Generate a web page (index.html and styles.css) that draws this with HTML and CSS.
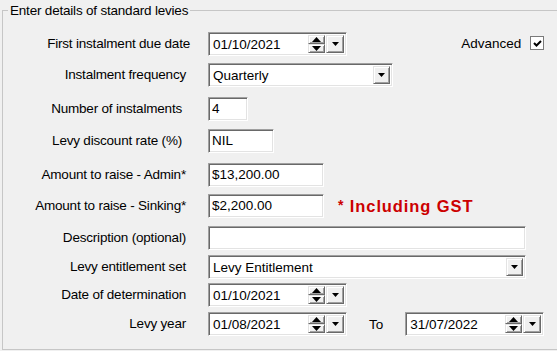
FILE: index.html
```html
<!DOCTYPE html>
<html lang="en">
<head>
    <meta charset="UTF-8">
    <meta name="viewport" content="width=device-width, initial-scale=1.0">
    <title>Standard Levies</title>
    <link rel="stylesheet" href="styles.css">
</head>
<body>

    <fieldset class="levy-group">
        <legend>Enter details of standard levies</legend>

        <div class="form-grid">
            <!-- First instalment -->
            <label class="field-label label-wide">First instalment due date</label>
            <div class="field">
                <div class="date-picker">
                    <span class="date-text">01/10/2021</span>
                    <span class="spin">
                        <span class="btn"><svg width="9" height="5"><path d="M4.5 0L9 5H0z"/></svg></span>
                        <span class="btn"><svg width="9" height="5"><path d="M0 0h9L4.5 5z"/></svg></span>
                    </span>
                    <span class="btn drop-btn"><svg width="7" height="4"><path d="M0 0h7L3.5 4z"/></svg></span>
                </div>
                <label class="advanced">
                    Advanced
                    <span class="check-box"><svg width="11" height="11"><path d="M2 5l2.5 2.5L9 3" fill="none" stroke="#000" stroke-width="2"/></svg></span>
                </label>
            </div>

            <label class="field-label">Instalment frequency</label>
            <div class="field">
                <div class="combo combo-freq">
                    <span class="combo-text">Quarterly</span>
                    <span class="btn drop-btn"><svg width="7" height="4"><path d="M0 0h7L3.5 4z"/></svg></span>
                </div>
            </div>

            <label class="field-label label-short">Number of instalments</label>
            <div class="field">
                <div class="text-box box-count">4</div>
            </div>

            <label class="field-label label-short">Levy discount rate (%)</label>
            <div class="field">
                <div class="text-box box-rate">NIL</div>
            </div>

            <label class="field-label">Amount to raise - Admin*</label>
            <div class="field">
                <div class="text-box box-amount">$13,200.00</div>
            </div>

            <label class="field-label">Amount to raise - Sinking*</label>
            <div class="field">
                <div class="text-box box-amount">$2,200.00</div>
                <span class="gst-note"><span class="star">*</span> Including GST</span>
            </div>

            <label class="field-label">Description (optional)</label>
            <div class="field">
                <div class="text-box box-wide"></div>
            </div>

            <label class="field-label">Levy entitlement set</label>
            <div class="field">
                <div class="combo box-wide">
                    <span class="combo-text">Levy Entitlement</span>
                    <span class="btn drop-btn"><svg width="7" height="4"><path d="M0 0h7L3.5 4z"/></svg></span>
                </div>
            </div>

            <label class="field-label">Date of determination</label>
            <div class="field">
                <div class="date-picker">
                    <span class="date-text">01/10/2021</span>
                    <span class="spin">
                        <span class="btn"><svg width="9" height="5"><path d="M4.5 0L9 5H0z"/></svg></span>
                        <span class="btn"><svg width="9" height="5"><path d="M0 0h9L4.5 5z"/></svg></span>
                    </span>
                    <span class="btn drop-btn"><svg width="7" height="4"><path d="M0 0h7L3.5 4z"/></svg></span>
                </div>
            </div>

            <label class="field-label">Levy year</label>
            <div class="field">
                <div class="date-picker">
                    <span class="date-text">01/08/2021</span>
                    <span class="spin">
                        <span class="btn"><svg width="9" height="5"><path d="M4.5 0L9 5H0z"/></svg></span>
                        <span class="btn"><svg width="9" height="5"><path d="M0 0h9L4.5 5z"/></svg></span>
                    </span>
                    <span class="btn drop-btn"><svg width="7" height="4"><path d="M0 0h7L3.5 4z"/></svg></span>
                </div>
                <span class="to-label">To</span>
                <div class="date-picker">
                    <span class="date-text">31/07/2022</span>
                    <span class="spin">
                        <span class="btn"><svg width="9" height="5"><path d="M4.5 0L9 5H0z"/></svg></span>
                        <span class="btn"><svg width="9" height="5"><path d="M0 0h9L4.5 5z"/></svg></span>
                    </span>
                    <span class="btn drop-btn"><svg width="7" height="4"><path d="M0 0h7L3.5 4z"/></svg></span>
                </div>
            </div>
        </div>
    </fieldset>

</body>
</html>
```

FILE: styles.css
```css
/* Reset margin and padding */
* {
    margin: 0;
    padding: 0;
    box-sizing: border-box;
}

body {
    background-color: #f0f0f0;
    font-family: 'Liberation Sans', Arial, sans-serif;
    font-size: 13.5px;
    color: #000;
}

/* Group box */
.levy-group {
    margin: 2px 2px 0 2px;
    height: 348px;
    border: 1px solid #c6c6c6;
    padding: 13px 19px 0 0;
}

.levy-group legend {
    margin-left: 5px;
    padding: 0 2px;
    line-height: 17px;
    letter-spacing: -0.2px;
}

/* Label column + field column */
.form-grid {
    display: grid;
    grid-template-columns: 183px 1fr;
    grid-template-rows: 31px 34px 32px 34px 31px 32px 29px 28px 29px 24px;
    column-gap: 22px;
}

.field-label {
    text-align: right;
    line-height: 24px;
    letter-spacing: -0.2px;
    white-space: nowrap;
}

.label-wide {
    margin-right: -4px;
}

.label-short {
    padding-right: 4px;
}

.field {
    display: flex;
    align-items: center;
    height: 24px;
}

/* Sunken 3D edge used by text boxes, combos and date pickers */
.text-box,
.combo,
.date-picker {
    height: 24px;
    background-color: #fff;
    border: 1px solid;
    border-color: #a0a0a0 #fff #fff #a0a0a0;
    box-shadow: inset 1px 1px #696969, inset -1px -1px #e3e3e3;
}

.text-box {
    padding: 0 3px;
    line-height: 22px;
    white-space: nowrap;
}

.box-count {
    width: 40px;
}

.box-rate {
    width: 66px;
}

.box-amount {
    width: 116px;
}

.box-wide {
    width: 318px;
}

/* Raised 3D button */
.btn {
    display: flex;
    align-items: center;
    justify-content: center;
    background-color: #f0f0f0;
    border: 1px solid;
    border-color: #e3e3e3 #696969 #696969 #e3e3e3;
    box-shadow: inset 1px 1px #fff, inset -1px -1px #a0a0a0;
}

.btn svg {
    display: block;
}

/* Combo box */
.combo {
    display: flex;
    padding: 2px;
}

.combo-freq {
    width: 185px;
}

.combo-text {
    flex: 1;
    padding-left: 2px;
    line-height: 20px;
    white-space: nowrap;
}

.drop-btn {
    width: 17px;
}

/* Date picker with spin buttons */
.date-picker {
    display: flex;
    width: 139px;
    padding: 2px;
}

.date-text {
    flex: 1;
    padding-left: 2px;
    line-height: 20px;
}

.spin {
    display: flex;
    flex-direction: column;
    width: 17px;
}

.spin .btn {
    flex: 1;
}

.date-picker .drop-btn {
    width: 18px;
    margin-left: 1px;
}

/* Advanced check box */
.advanced {
    display: flex;
    align-items: center;
    margin-left: auto;
    margin-top: -2px;
}

.check-box {
    display: flex;
    align-items: center;
    justify-content: center;
    width: 14px;
    height: 14px;
    margin-left: 9px;
    background-color: #fff;
    border: 1px solid #7a7a7a;
}

/* Red GST note */
.gst-note {
    margin-left: 14px;
    color: #cc0000;
    font-weight: bold;
    font-size: 16.5px;
    letter-spacing: 0.9px;
}

.gst-note .star {
    font-size: 14px;
    vertical-align: 2px;
}

.to-label {
    margin: 0 22px;
}
```
